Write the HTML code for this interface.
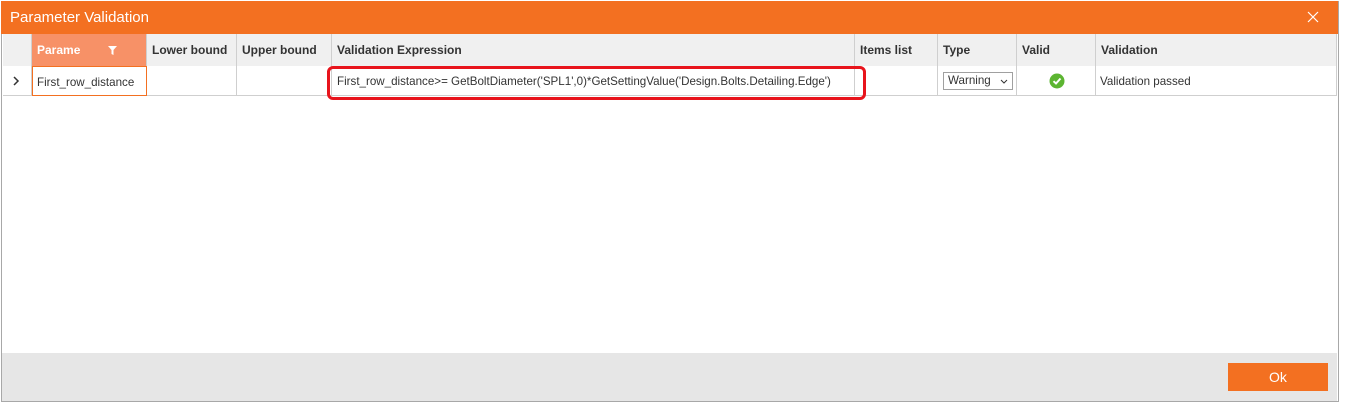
<!DOCTYPE html>
<html><head><style>
body{margin:0;width:1348px;height:407px;background:#fff;font-family:"Liberation Sans",sans-serif;position:relative;overflow:hidden}
.win{position:absolute;left:1px;top:1px;width:1336px;height:400px;border:1px solid #a8a8a8;border-top:none;background:#fff}
.title{position:absolute;left:1px;top:1px;width:1337px;height:33px;background:#f37021;color:#fff;font-size:15px;line-height:34px;padding-left:9px;box-sizing:border-box}
.x{position:absolute;right:18px;top:9px;width:14px;height:14px}
.hdr{position:absolute;top:34px;height:32px;background:#f0f0f0;border-right:1px solid #cfcfcf;box-sizing:border-box;font-size:12px;font-weight:bold;color:#333;line-height:33px;padding-left:5px}
.cell{position:absolute;top:66px;height:30px;border-right:1px solid #cfcfcf;border-bottom:1px solid #cfcfcf;box-sizing:border-box;font-size:11.6px;color:#333;line-height:31px;padding-left:4px;white-space:nowrap}
.foot{position:absolute;left:2px;top:353px;width:1335px;height:48px;background:#e6e6e6}
.ok{position:absolute;left:1228px;top:363px;width:100px;height:28px;background:#f37021;color:#fff;font-size:14px;text-align:center;line-height:29px}
</style></head><body>
<div class="win"></div>
<div class="title">Parameter Validation
<svg class="x" viewBox="0 0 14 14"><path d="M2 2L12 12M12 2L2 12" stroke="#fff" stroke-width="1.2"/></svg></div>
<div class="hdr" style="left:3px;width:29px"></div>
<div class="hdr" style="left:32px;width:115px;background:#f79167;color:#fff">Parame<svg style="position:absolute;left:76px;top:12px" width="9" height="9" viewBox="0 0 9 9"><path d="M0 0H9L5.5 4V9L3.5 8V4Z" fill="#fff"/></svg></div>
<div class="hdr" style="left:147px;width:90px">Lower bound</div>
<div class="hdr" style="left:237px;width:95px">Upper bound</div>
<div class="hdr" style="left:332px;width:523px">Validation Expression</div>
<div class="hdr" style="left:855px;width:83px">Items list</div>
<div class="hdr" style="left:938px;width:79px">Type</div>
<div class="hdr" style="left:1017px;width:79px">Valid</div>
<div class="hdr" style="left:1096px;width:241px">Validation</div>
<div class="cell" style="left:3px;width:29px"><svg style="position:absolute;left:10px;top:10px" width="7" height="10" viewBox="0 0 7 10"><path d="M1 1L5 5L1 9" stroke="#333" stroke-width="1.5" fill="none"/></svg></div>
<div class="cell" style="left:32px;width:115px;border:1px solid #f37021;height:30px">First_row_distance</div>
<div class="cell" style="left:147px;width:90px"></div>
<div class="cell" style="left:237px;width:95px"></div>
<div class="cell" style="left:332px;width:523px;padding-left:5px">First_row_distance&gt;= GetBoltDiameter('SPL1',0)*GetSettingValue('Design.Bolts.Detailing.Edge')</div>
<div class="cell" style="left:855px;width:83px"></div>
<div class="cell" style="left:938px;width:79px"><div style="position:absolute;left:5px;top:6px;width:70px;height:18px;border:1px solid #a0a0a0;box-sizing:border-box;line-height:16px;padding-left:4px">Warning<svg style="position:absolute;right:4px;top:6px" width="8" height="5" viewBox="0 0 8 5"><path d="M1 1L4 4L7 1" stroke="#333" fill="none"/></svg></div></div>
<div class="cell" style="left:1017px;width:79px"><svg style="position:absolute;left:32px;top:7px" width="16" height="16" viewBox="0 0 16 16"><circle cx="8" cy="8" r="7.5" fill="#5cb531"/><path d="M4.5 8.2L7 10.5L11.5 5.5" stroke="#fff" stroke-width="2" fill="none"/></svg></div>
<div class="cell" style="left:1096px;width:241px">Validation passed</div>
<div style="position:absolute;left:327px;top:66px;width:539px;height:34px;border:3px solid #e8141c;border-radius:6px;box-sizing:border-box"></div>
<div class="foot"></div>
<div class="ok">Ok</div>
</body></html>
